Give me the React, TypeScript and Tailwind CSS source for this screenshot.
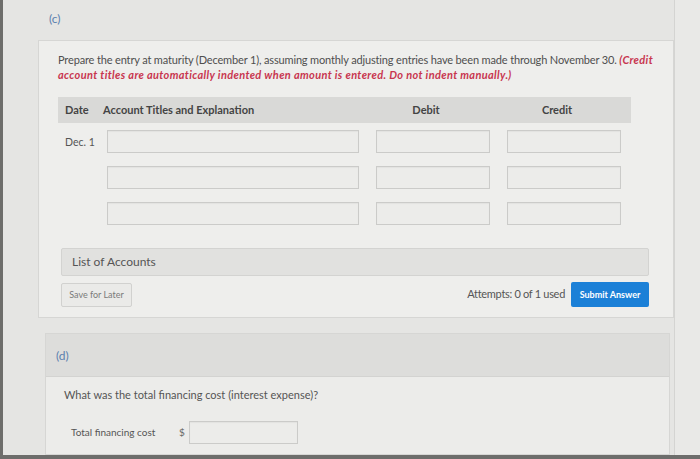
import React from "react";

// Journal entry rows: first row carries the date, the rest are blank lines.
const ROWS = ["Dec. 1", "", ""];

function Field({ className = "" }: { className?: string }) {
  return (
    <div
      className={`h-[23px] border border-[#cbcbc9] bg-[#ececea] shadow-[inset_0_1px_1px_rgba(0,0,0,0.04)] ${className}`}
    />
  );
}

export default function App() {
  return (
    <div className="w-[700px] h-[459px] overflow-hidden bg-[#e5e5e3] border-l-[3px] border-b-[4px] border-[#6d6d6b] font-['Lato','Noto_Sans',sans-serif] text-[#4f4f4f]">
      <div className="flex h-full">
        <div className="ml-[35px] w-[636px] flex flex-col">
          {/* Part (c) */}
          <div className="h-[40px] pl-[11px] pt-[10px] text-[12px] text-[#5b7fae]">(c)</div>
          <div className="h-[278px] border border-[#d6d6d4] bg-[#eeeeec] pl-[19px] pr-[14px] pt-[11px]">
            <p className="text-[11px] leading-[15px] tracking-[-0.15px]">
              Prepare the entry at maturity (December 1), assuming monthly adjusting entries have been made through November 30.{" "}
              <span className="font-bold italic tracking-[0.35px] text-[#c8364f]">
                (Credit account titles are automatically indented when amount is entered. Do not indent manually.)
              </span>
            </p>

            <div className="mt-[15px] w-[573px]">
              <div className="grid grid-cols-[45px_266px_114px_17px_114px] h-[26px] items-center bg-[#d9d9d7] text-[11px] font-bold text-[#444]">
                <span className="pl-[7px]">Date</span>
                <span>Account Titles and Explanation</span>
                <span className="text-center">Debit</span>
                <span />
                <span className="text-center">Credit</span>
              </div>
              <div className="flex flex-col gap-[13px] pt-[7px]">
                {ROWS.map((date, i) => (
                  <div key={i} className="grid grid-cols-[49px_252px_17px_114px_17px_114px] items-center">
                    <span className="pl-[7px] pt-[2px] text-[10.5px] text-[#555]">{date}</span>
                    <Field />
                    <span />
                    <Field />
                    <span />
                    <Field />
                  </div>
                ))}
              </div>
            </div>

            <div className="mt-[23px] ml-[3px] w-[588px] h-[28px] flex items-center pl-[10px] border border-[#d3d3d1] rounded-[2px] bg-[#e1e1df] text-[12px] text-[#555]">
              List of Accounts
            </div>

            <div className="mt-[6px] ml-[3px] w-[588px] flex items-center justify-between">
              <div className="h-[24px] w-[71px] flex items-center justify-center border border-[#d1d1cf] rounded-[2px] bg-[#eaeae8] text-[9px] text-[#7a7a7a]">
                Save for Later
              </div>
              <div className="flex items-center gap-[6px]">
                <span className="text-[11px] tracking-[-0.3px] text-[#555]">Attempts: 0 of 1 used</span>
                <div className="h-[25px] w-[78px] flex items-center justify-center rounded-[2px] bg-[#1b80d7] text-[9px] font-bold text-white">
                  Submit Answer
                </div>
              </div>
            </div>
          </div>

          {/* Part (d) */}
          <div className="mt-[15px] ml-[7px] w-[625px] flex-1 border border-[#d6d6d4] flex flex-col">
            <div className="h-[42px] bg-[#dddddb] pl-[10px] pt-[13px] text-[12px] text-[#5b7fae]">(d)</div>
            <div className="flex-1 bg-[#ececea] border-t border-[#d3d3d1] pl-[18px] pt-[10px]">
              <p className="text-[11px] text-[#555]">What was the total financing cost (interest expense)?</p>
              <div className="mt-[17px] ml-[7px] flex items-center">
                <span className="w-[108px] text-[10px] text-[#555]">Total financing cost</span>
                <span className="w-[10px] text-[10px] text-[#666]">$</span>
                <Field className="w-[109px] h-[22px]" />
              </div>
            </div>
          </div>
        </div>
        <div className="flex-1 border-l border-[#d4d4d2] bg-[#e9e9e7]" />
      </div>
    </div>
  );
}
